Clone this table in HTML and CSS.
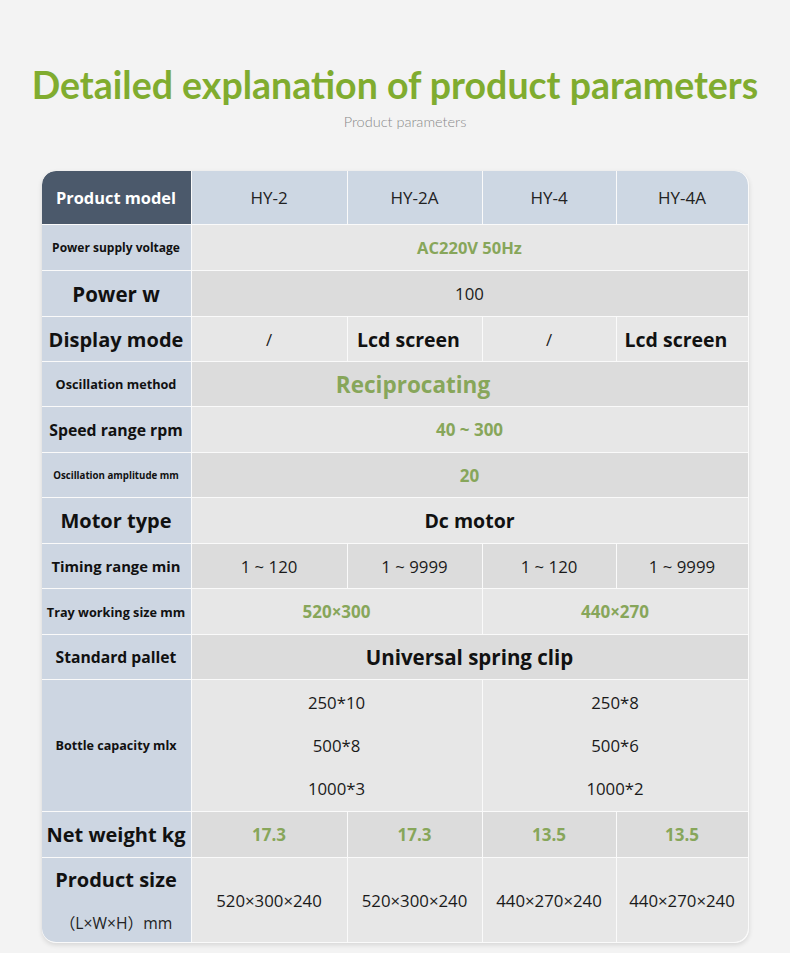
FILE: index.html
```html
<!DOCTYPE html>
<html lang="en">
<head>
<meta charset="utf-8">
<title>Product parameters</title>
<link rel="stylesheet" href="styles.css">
</head>
<body>
<main class="page">
  <header class="intro">
    <h1 class="title">Detailed explanation of product parameters</h1>
    <p class="subtitle">Product parameters</p>
  </header>

  <section class="table">
    <div class="cell head-dark tl">Product model</div>
    <div class="cell head">HY-2</div>
    <div class="cell head">HY-2A</div>
    <div class="cell head">HY-4</div>
    <div class="cell head tr">HY-4A</div>

    <div class="cell label fs-12">Power supply voltage</div>
    <div class="cell light span4 green fs-165">AC220V 50Hz</div>

    <div class="cell label fs-205">Power w</div>
    <div class="cell dark span4 plain">100</div>

    <div class="cell label fs-20">Display mode</div>
    <div class="cell light plain">/</div>
    <div class="cell light strong nudge">Lcd screen</div>
    <div class="cell light plain">/</div>
    <div class="cell light strong nudge">Lcd screen</div>

    <div class="cell label fs-127">Oscillation method</div>
    <div class="cell dark span4 green fs-225 offset">Reciprocating</div>

    <div class="cell label fs-158">Speed range rpm</div>
    <div class="cell light span4 green">40 ~ 300</div>

    <div class="cell label fs-97">Oscillation amplitude mm</div>
    <div class="cell dark span4 green">20</div>

    <div class="cell label fs-20">Motor type</div>
    <div class="cell light span4 strong">Dc motor</div>

    <div class="cell label fs-148">Timing range min</div>
    <div class="cell dark plain">1 ~ 120</div>
    <div class="cell dark plain">1 ~ 9999</div>
    <div class="cell dark plain">1 ~ 120</div>
    <div class="cell dark plain">1 ~ 9999</div>

    <div class="cell label fs-127">Tray working size mm</div>
    <div class="cell light span2 green">520×300</div>
    <div class="cell light span2 green">440×270</div>

    <div class="cell label fs-157">Standard pallet</div>
    <div class="cell dark span4 strong fs-205">Universal spring clip</div>

    <div class="cell label fs-126">Bottle capacity mlx</div>
    <div class="cell light span2 plain stack">
      <span>250*10</span><span>500*8</span><span>1000*3</span>
    </div>
    <div class="cell light span2 plain stack">
      <span>250*8</span><span>500*6</span><span>1000*2</span>
    </div>

    <div class="cell label fs-20">Net weight kg</div>
    <div class="cell dark green">17.3</div>
    <div class="cell dark green">17.3</div>
    <div class="cell dark green">13.5</div>
    <div class="cell dark green">13.5</div>

    <div class="cell label size-label bl">
      <span class="fs-20">Product size</span>
      <span class="size-unit">（L×W×H）mm</span>
    </div>
    <div class="cell light plain">520×300×240</div>
    <div class="cell light plain">520×300×240</div>
    <div class="cell light plain">440×270×240</div>
    <div class="cell light plain br">440×270×240</div>
  </section>
</main>
</body>
</html>
```

FILE: styles.css
```css
html, body {
  margin: 0;
  padding: 0;
}

body {
  background: #f3f3f3;
  font-family: "Open Sans", "Noto Sans", "Noto Sans CJK SC", sans-serif;
  color: #111;
}

.page {
  width: 790px;
  height: 953px;
  display: flex;
  flex-direction: column;
  align-items: center;
}

.intro {
  display: flex;
  flex-direction: column;
  align-items: center;
  padding-top: 62px;
}

.title {
  margin: 0;
  font-family: "Lato", "Open Sans", sans-serif;
  font-weight: 700;
  font-size: 37.5px;
  line-height: 46px;
  color: #80ac2f;
  white-space: nowrap;
}

.subtitle {
  margin: 6px 0 0 20px;
  font-family: "Lato", sans-serif;
  font-weight: 300;
  font-size: 14.5px;
  line-height: 16px;
  color: #8a8a8a;
}

.table {
  margin-top: 41px;
  display: grid;
  grid-template-columns: 149px 155px 134px 133px 131px;
  grid-template-rows: 53px 45px 45px 44px 44px 45px 44px 45px 44px 45px 44px 131px 45px 84px;
  gap: 1px;
  background: #fafafa;
  border-right: 1px solid #fafafa;
  border-bottom: 1px solid #fafafa;
  border-radius: 14px;
  box-shadow: 0 2px 5px rgba(0, 0, 0, 0.12);
  overflow: hidden;
}

.cell {
  display: flex;
  align-items: center;
  justify-content: center;
  text-align: center;
  white-space: nowrap;
}

.head-dark {
  background: #4b596b;
  color: #fff;
  font-weight: 700;
  font-size: 16.4px;
}

.head {
  background: #cdd7e3;
  color: #222;
  font-size: 17px;
}

.label {
  background: #cdd6e2;
  font-weight: 700;
  color: #111;
}

.light { background: #e7e7e7; }
.dark { background: #dcdcdc; }

.span2 { grid-column: span 2; }
.span4 { grid-column: span 4; }

.plain {
  font-size: 16.8px;
  color: #1a1a1a;
}

.strong {
  font-size: 19.5px;
  font-weight: 700;
  color: #111;
}

.green {
  color: #87a65a;
  font-weight: 700;
  font-size: 17px;
}

.nudge { padding-right: 12px; }
.offset { padding-right: 113px; }

.fs-97 { font-size: 9.7px; }
.fs-12 { font-size: 12px; }
.fs-126 { font-size: 12.6px; }
.fs-127 { font-size: 12.7px; }
.fs-148 { font-size: 14.8px; }
.fs-157 { font-size: 15.7px; }
.fs-158 { font-size: 15.8px; }
.fs-165 { font-size: 16.5px; }
.fs-20 { font-size: 20px; }
.fs-205 { font-size: 20.5px; }
.fs-225 { font-size: 22.5px; }

.stack {
  flex-direction: column;
  gap: 21px;
  line-height: 22px;
}

.size-label {
  flex-direction: column;
  gap: 18px;
}

.size-unit {
  font-weight: 400;
  font-size: 15.7px;
  color: #222;
}

.tl { border-top-left-radius: 14px; }
.tr { border-top-right-radius: 14px; }
.bl { border-bottom-left-radius: 14px; }
.br { border-bottom-right-radius: 14px; }
```
